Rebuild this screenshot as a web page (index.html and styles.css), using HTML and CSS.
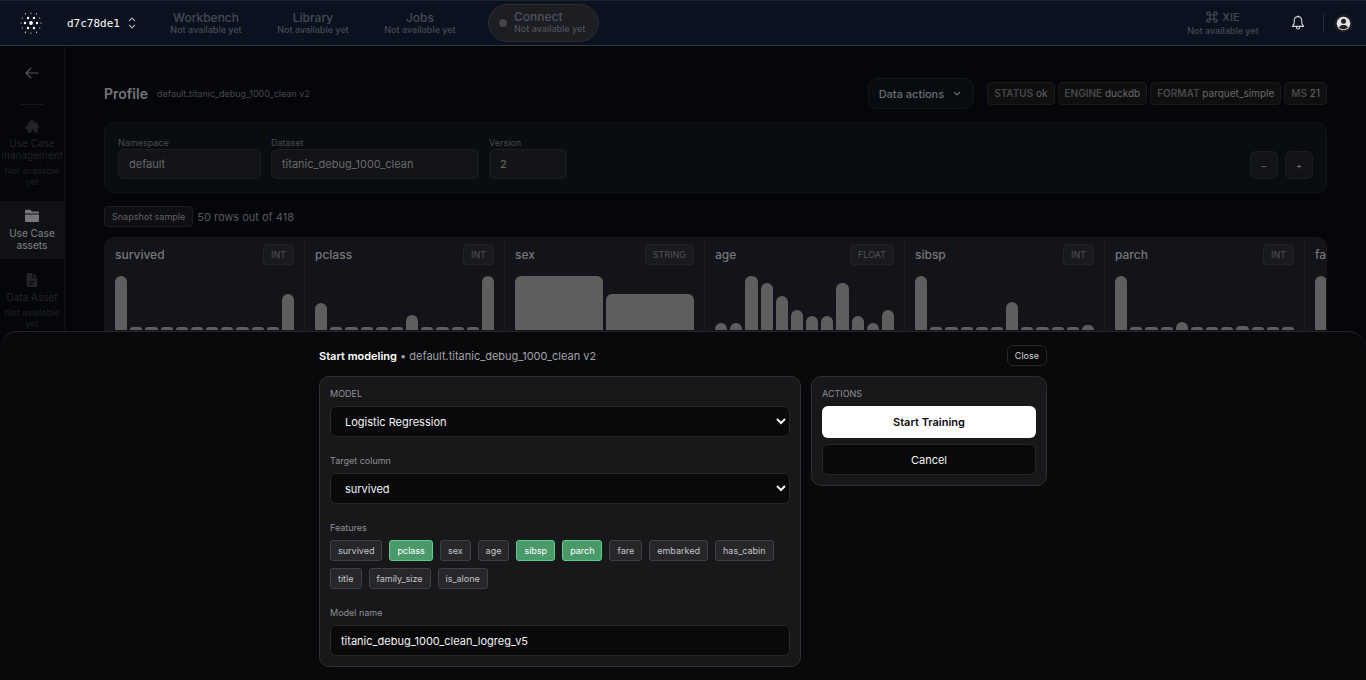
FILE: index.html
```html
<!DOCTYPE html>
<html lang="en">
<head>
    <meta charset="UTF-8">
    <meta name="viewport" content="width=device-width, initial-scale=1.0">
    <title>Profile - titanic_debug_1000_clean</title>
    <link rel="stylesheet" href="styles.css">
</head>
<body>
    <header class="topbar">
        <svg class="logo" viewBox="0 0 22 22" fill="#fff">
            <circle cx="11" cy="11" r="1.9"/>
            <circle cx="8" cy="6" r="1.2"/><circle cx="14" cy="6" r="1.2"/>
            <circle cx="5" cy="11" r="1.2"/><circle cx="17" cy="11" r="1.2"/>
            <circle cx="8" cy="16" r="1.2"/><circle cx="14" cy="16" r="1.2"/>
            <circle cx="11" cy="1" r=".6"/><circle cx="11" cy="21" r=".6"/>
            <circle cx="1" cy="11" r=".6"/><circle cx="21" cy="11" r=".6"/>
            <circle cx="5.5" cy="1.8" r=".6"/><circle cx="16.5" cy="1.8" r=".6"/>
            <circle cx="2.3" cy="6" r=".6"/><circle cx="19.7" cy="6" r=".6"/>
            <circle cx="2.3" cy="16" r=".6"/><circle cx="19.7" cy="16" r=".6"/>
            <circle cx="5.5" cy="20.2" r=".6"/><circle cx="16.5" cy="20.2" r=".6"/>
        </svg>
        <button class="project" type="button">
            d7c78de1
            <svg width="8" height="12" viewBox="0 0 8 12" fill="none" stroke="#aeb2b9" stroke-width="1.1"><path d="M1 4.2 4 1l3 3.2M1 7.8 4 11l3-3.2"/></svg>
        </button>
        <nav class="nav">
            <a class="nav-item" href="#">Workbench<small>Not available yet</small></a>
            <a class="nav-item" href="#">Library<small>Not available yet</small></a>
            <a class="nav-item" href="#">Jobs<small>Not available yet</small></a>
        </nav>
        <button class="connect" type="button">
            <span class="dot"></span>
            <span class="connect-text">Connect<small>Not available yet</small></span>
        </button>
        <div class="topbar-right">
            <a class="nav-item" href="#">
                <span class="xie">
                    <svg width="12" height="12" viewBox="0 0 12 12" fill="none" stroke="currentColor" stroke-width="1.2"><path d="M4 4h4v4H4zM4 4V2.4A1.6 1.6 0 1 0 2.4 4H4M8 4h1.6A1.6 1.6 0 1 0 8 2.4V4M8 8v1.6A1.6 1.6 0 1 0 9.6 8H8M4 8H2.4A1.6 1.6 0 1 0 4 9.6V8"/></svg>
                    XIE
                </span>
                <small>Not available yet</small>
            </a>
            <button class="icon-btn" type="button" aria-label="Notifications">
                <svg width="14" height="16" viewBox="0 0 14 16" fill="none" stroke="#d0d2d6" stroke-width="1.1" stroke-linejoin="round"><path d="M7 1.6C4.4 1.6 3.2 3.5 3.2 5.6v3L1.4 11.4h11.2l-1.8-2.8v-3C10.8 3.5 9.6 1.6 7 1.6zM5.5 11.6v.9c0 .9.6 1.5 1.5 1.5s1.5-.6 1.5-1.5v-.9M6 1.3h2"/></svg>
            </button>
            <span class="separator"></span>
            <button class="icon-btn avatar" type="button" aria-label="Account">
                <svg width="19" height="19" viewBox="0 0 19 19"><circle cx="9.5" cy="9.5" r="9" fill="#202022"/><circle cx="9.5" cy="9.5" r="6.8" fill="#e4e4e7"/><circle cx="9.5" cy="7.3" r="2.5" fill="#202022"/><path d="M5 13.2c1.2-1.5 2.7-2.1 4.5-2.1s3.3.6 4.5 2.1c-1.2 1.4-2.7 2.1-4.5 2.1s-3.3-.7-4.5-2.1z" fill="#202022"/></svg>
            </button>
        </div>
    </header>

    <div class="layout">
        <aside class="sidebar">
            <a class="back" href="#" aria-label="Back">
                <svg width="14" height="12" viewBox="0 0 14 12" fill="none" stroke="#59595d" stroke-width="1.2"><path d="M13.5 6H1M6.3.7 1 6l5.3 5.3"/></svg>
            </a>
            <a class="side-item" href="#">
                <svg width="14" height="14" viewBox="0 0 14 14" fill="currentColor"><path d="M2.6 3.4h2.8C4.500 1.800 5.300.2 6.900.2s2.400 1.600 1.500 3.200h4.200v3h1.100c.3.900.3 1.700 0 2.600h-1.100v4.700H9.300c.5-1.600-.2-2.600-1.500-2.600s-2 1-1.500 2.600H2.600v-3.400C1 10.900 0 10 0 8.600s1.200-2.300 2.600-1.500z"/></svg>
                <span>Use Case management</span>
                <small>Not available yet</small>
            </a>
            <a class="side-item active" href="#">
                <svg width="14" height="14" viewBox="0 0 14 14" fill="currentColor"><path d="M0 4.4V2.2C0 1.4.6.8 1.4.8h3.4c.5 0 .9.2 1.2.6l.9 1h5.7c.8 0 1.4.6 1.4 1.4v.6zM0 5.6h14v5.8c0 .9-.7 1.6-1.6 1.6H1.6C.7 13 0 12.3 0 11.4z"/></svg>
                <span>Use Case assets</span>
            </a>
            <a class="side-item" href="#">
                <svg width="14" height="14" viewBox="0 0 14 14" fill="currentColor"><path fill-rule="evenodd" d="M1.5 1.4C1.5.6 2.1 0 2.9 0h4.4v4.8h5v7.8c0 .8-.6 1.4-1.4 1.4h-8c-.8 0-1.4-.6-1.4-1.4zM4 8v1.1h5.8V8zm0 2.6v1.1h4v-1.1zM8.3 0l4 3.9h-4z"/></svg>
                <span>Data Asset</span>
                <small>Not available yet</small>
            </a>
        </aside>

        <main class="main">
            <div class="page-head">
                <h1>Profile</h1>
                <span class="subtitle">default.titanic_debug_1000_clean v2</span>
                <button class="data-actions" type="button">
                    Data actions
                    <svg width="8" height="6" viewBox="0 0 8 6" fill="none" stroke="currentColor" stroke-width="1.2"><path d="m1 1 3 3 3-3"/></svg>
                </button>
                <div class="pills">
                    <span class="pill"><b>STATUS</b> ok</span>
                    <span class="pill"><b>ENGINE</b> duckdb</span>
                    <span class="pill"><b>FORMAT</b> parquet_simple</span>
                    <span class="pill"><b>MS</b> 21</span>
                </div>
            </div>

            <section class="params">
                <div class="param namespace">
                    <label for="namespace">Namespace</label>
                    <input type="text" id="namespace" value="default">
                </div>
                <div class="param dataset">
                    <label for="dataset">Dataset</label>
                    <input type="text" id="dataset" value="titanic_debug_1000_clean">
                </div>
                <div class="param version">
                    <label for="version">Version</label>
                    <input type="text" id="version" value="2">
                </div>
                <div class="zoom">
                    <button type="button">−</button>
                    <button type="button">+</button>
                </div>
            </section>

            <div class="sample">
                <button class="tag" type="button">Snapshot sample</button>
                <span>50 rows out of 418</span>
            </div>

            <div class="columns" id="columns"></div>
        </main>
    </div>

    <section class="drawer" role="dialog" aria-labelledby="drawerTitle">
        <div class="drawer-inner">
            <div class="drawer-head">
                <div class="drawer-title"><strong id="drawerTitle">Start modeling</strong> • default.titanic_debug_1000_clean v2</div>
                <button class="close" type="button">Close</button>
            </div>
            <form class="drawer-grid">
                <div class="panel">
                    <div class="field">
                        <label for="model">MODEL</label>
                        <select id="model">
                            <option>Logistic Regression</option>
                        </select>
                    </div>
                    <div class="field">
                        <label for="target">Target column</label>
                        <select id="target">
                            <option>survived</option>
                            <option>pclass</option>
                            <option>sex</option>
                        </select>
                    </div>
                    <div class="field">
                        <span class="field-label">Features</span>
                        <div class="features">
                            <button class="feature" type="button">survived</button>
                            <button class="feature selected" type="button">pclass</button>
                            <button class="feature" type="button">sex</button>
                            <button class="feature" type="button">age</button>
                            <button class="feature selected" type="button">sibsp</button>
                            <button class="feature selected" type="button">parch</button>
                            <button class="feature" type="button">fare</button>
                            <button class="feature" type="button">embarked</button>
                            <button class="feature" type="button">has_cabin</button>
                            <button class="feature" type="button">title</button>
                            <button class="feature" type="button">family_size</button>
                            <button class="feature" type="button">is_alone</button>
                        </div>
                    </div>
                    <div class="field">
                        <label for="modelName">Model name</label>
                        <input type="text" id="modelName" value="titanic_debug_1000_clean_logreg_v5">
                    </div>
                </div>
                <div class="panel actions">
                    <span class="field-label">ACTIONS</span>
                    <button class="btn-primary" type="button">Start Training</button>
                    <button class="btn-secondary" type="button">Cancel</button>
                </div>
            </form>
        </div>
    </section>

    <script src="script.js"></script>
</body>
</html>
```
FILE: styles.css
```css
* {
    box-sizing: border-box;
    margin: 0;
    padding: 0;
}

body {
    font-family: Inter, "Liberation Sans", sans-serif;
    font-size: 11px;
    background-color: #04060b;
    color: #77777a;
    height: 100vh;
    overflow: hidden;
}

button, input, select {
    font-family: inherit;
    font-size: 11px;
    color: inherit;
}

button {
    cursor: pointer;
}

a {
    color: inherit;
    text-decoration: none;
}

small {
    display: block;
    font-size: 9px;
}

/* top bar */
.topbar {
    display: flex;
    align-items: center;
    height: 46px;
    padding: 0 13px 0 20px;
    background-color: #0b121f;
    border-top: 1px solid #1b232f;
    border-bottom: 1px solid #30363f;
    color: #454b56;
}

.logo {
    width: 22px;
    height: 22px;
}

.project {
    display: flex;
    align-items: center;
    gap: 8px;
    margin-left: 25px;
    border: none;
    background: none;
    color: #fff;
    font-family: "DejaVu Sans Mono", monospace;
}

.nav {
    display: flex;
    gap: 31px;
    margin-left: 32px;
}

.nav-item {
    min-width: 76px;
    font-size: 12px;
    font-weight: 500;
    line-height: 13px;
    text-align: center;
}

.nav-item small, .connect small {
    line-height: 12px;
    white-space: nowrap;
}

.connect {
    display: flex;
    align-items: center;
    gap: 7px;
    height: 38px;
    margin-left: 30px;
    padding: 0 13px 0 10px;
    border: 1px solid #2a2c30;
    border-radius: 19px;
    background-color: #1c1e23;
    color: #50525a;
}

.connect-text {
    font-size: 12px;
    font-weight: 500;
    line-height: 12px;
    text-align: left;
}

.dot {
    width: 8px;
    height: 8px;
    border-radius: 50%;
    background-color: #43454b;
}

.topbar-right {
    display: flex;
    align-items: center;
    margin-left: auto;
}

.xie {
    display: flex;
    align-items: center;
    justify-content: center;
    gap: 4px;
    font-size: 11px;
    height: 16px;
}

.icon-btn {
    display: flex;
    border: none;
    background: none;
    margin-left: 30px;
}

.separator {
    width: 1px;
    height: 19px;
    margin-left: 18px;
    background-color: #262d38;
}

.avatar {
    margin-left: 10px;
}

/* sidebar */
.layout {
    display: flex;
}

.sidebar {
    display: flex;
    flex-direction: column;
    align-items: center;
    gap: 6px;
    width: 65px;
    min-height: calc(100vh - 46px);
    border-right: 1px solid #111216;
}

.back {
    display: flex;
    width: 24px;
    height: 59px;
    padding: 21px 5px 0;
    border-bottom: 1px solid #16171a;
}

.side-item {
    display: flex;
    flex-direction: column;
    align-items: center;
    gap: 4px;
    width: 100%;
    padding: 8px 0;
    color: #232428;
    font-size: 10px;
    line-height: 12px;
    text-align: center;
}

.side-item small {
    width: 56px;
    line-height: 11px;
    color: #1f2024;
}

.side-item span {
    max-width: 62px;
}

.side-item.active {
    background-color: #101115;
    color: #77777a;
    font-weight: 500;
}

.side-item.active span {
    width: 50px;
}

/* profile page */
.main {
    flex: 1;
    min-width: 0;
    padding: 32px 39px;
}

.page-head {
    display: flex;
    align-items: center;
    margin-bottom: 13px;
}

h1 {
    font-size: 14px;
    font-weight: 600;
    color: #757578;
}

.subtitle {
    margin-left: 9px;
    font-size: 9px;
    color: #48484c;
}

.data-actions {
    display: flex;
    align-items: center;
    gap: 9px;
    height: 31px;
    margin-left: auto;
    padding: 0 12px 0 10px;
    border: 1px solid #14171b;
    border-radius: 10px;
    background-color: #080c11;
    color: #6b6d70;
    font-weight: 500;
}

.pills {
    display: flex;
    gap: 3px;
    margin-left: 13px;
}

.pill {
    height: 23px;
    padding: 0 6px;
    border: 1px solid #1a1a1b;
    border-radius: 4px;
    background-color: #0f0f10;
    font-size: 10px;
    line-height: 21px;
    color: #69696b;
}

.pill b {
    font-weight: 600;
    color: #47474a;
}

.params {
    display: flex;
    align-items: flex-end;
    gap: 10px;
    padding: 13px;
    border: 1px solid #121519;
    border-radius: 10px;
    background-color: #090c11;
}

.param label {
    display: block;
    font-size: 9px;
    line-height: 13px;
    color: #4a4c4f;
}

.param input {
    width: 100%;
    height: 30px;
    padding: 0 10px;
    border: 1px solid #1d1e22;
    border-radius: 6px;
    background-color: #131418;
    color: #69696c;
}

.namespace {
    width: 143px;
}

.dataset {
    width: 208px;
}

.version {
    width: 78px;
}

.zoom {
    display: flex;
    gap: 7px;
    margin-left: auto;
}

.zoom button {
    width: 28px;
    height: 28px;
    border: 1px solid #1d1e22;
    border-radius: 6px;
    background-color: #131418;
    font-size: 9px;
}

.sample {
    display: flex;
    align-items: center;
    gap: 4px;
    margin: 13px 0 10px;
    color: #59595c;
}

.tag {
    height: 21px;
    padding: 0 7px;
    border: 1px solid #1d1e22;
    border-radius: 4px;
    background-color: #0e0f13;
    color: #606063;
    font-size: 9px;
}

.columns {
    display: flex;
    overflow: hidden;
    border: 1px solid #15161a;
    border-radius: 10px;
    background-color: #131419;
}

.column {
    flex: 0 0 200px;
    height: 400px;
    padding: 6px 10px;
    border-right: 1px solid #1d1e22;
}

.column-head {
    display: flex;
    justify-content: space-between;
    align-items: center;
    margin-bottom: 11px;
}

.column-name {
    font-size: 12px;
    font-weight: 500;
    color: #777779;
}

.type {
    height: 21px;
    padding: 0 7px;
    border: 1px solid #222327;
    border-radius: 4px;
    background-color: #191a1e;
    font-size: 9px;
    line-height: 19px;
    color: #515255;
}

.bars {
    display: flex;
    align-items: flex-end;
    gap: 3px;
    height: 54px;
}

.bar {
    flex: 1;
    border-radius: 6px 6px 0 0;
    background-color: #5e5e5e;
}

/* modeling drawer */
.drawer {
    position: fixed;
    left: 0;
    right: 0;
    bottom: 0;
    padding: 13px 20px;
    border-top: 1px solid #26262a;
    border-radius: 18px 18px 0 0;
    background-color: #09090b;
}

.drawer-inner {
    max-width: 728px;
    margin: 0 auto;
}

.drawer-head {
    display: flex;
    justify-content: space-between;
    align-items: center;
    margin-bottom: 10px;
}

.drawer-title {
    color: #a1a1aa;
}

.drawer-title strong {
    font-weight: 600;
    color: #fff;
}

.close {
    height: 21px;
    padding: 0 7px;
    border: 1px solid #27272a;
    border-radius: 6px;
    background-color: #09090b;
    color: #d4d4d8;
    font-size: 9px;
}

.drawer-grid {
    display: grid;
    grid-template-columns: 1fr 236px;
    align-items: start;
    gap: 10px;
}

.panel {
    display: flex;
    flex-direction: column;
    gap: 17px;
    padding: 10px;
    border: 1px solid #2f2f33;
    border-radius: 10px;
    background-color: #18181b;
}

.field label, .field-label {
    display: block;
    font-size: 9px;
    line-height: 13px;
    color: #8f8f98;
}

.field label, .field .field-label {
    margin-bottom: 6px;
}

.field select, .field input {
    display: block;
    width: 100%;
    height: 31px;
    padding: 0 10px;
    border: 1px solid #27272a;
    border-radius: 6px;
    background-color: #09090b;
    color: #f4f4f5;
}

.features {
    display: flex;
    flex-wrap: wrap;
    gap: 7px;
}

.feature {
    height: 21px;
    padding: 0 7px;
    border: 1px solid #3f3f46;
    border-radius: 3px;
    background-color: #27272a;
    color: #c4c4c9;
    font-size: 9px;
}

.feature.selected {
    border-color: #5fcf8c;
    background-color: #4a9969;
    color: #fff;
}

.actions {
    gap: 6px;
}

.btn-primary {
    height: 32px;
    border: none;
    border-radius: 6px;
    background-color: #fff;
    color: #09090b;
    font-weight: 600;
}

.btn-secondary {
    height: 31px;
    border: 1px solid #27272a;
    border-radius: 6px;
    background-color: #09090b;
    color: #f4f4f5;
}
```
FILE: script.js
```js
const columns = [
    { name: 'survived', type: 'INT', bars: [54, 3, 3, 3, 3, 3, 3, 3, 3, 3, 3, 36] },
    { name: 'pclass', type: 'INT', bars: [27, 3, 3, 3, 3, 3, 15, 3, 3, 3, 3, 54] },
    { name: 'sex', type: 'STRING', bars: [54, 36] },
    { name: 'age', type: 'FLOAT', bars: [7, 7, 54, 47, 34, 20, 14, 14, 47, 14, 7, 20] },
    { name: 'sibsp', type: 'INT', bars: [54, 3, 3, 3, 3, 3, 28, 3, 3, 3, 3, 5] },
    { name: 'parch', type: 'INT', bars: [54, 3, 3, 3, 8, 3, 3, 3, 4, 3, 3, 3] },
    { name: 'fare', type: 'FLOAT', bars: [54, 20, 7, 3, 3, 3, 3, 3, 3, 3, 3, 3] }
];

document.getElementById('columns').innerHTML = columns.map(column => `
    <div class="column">
        <div class="column-head">
            <span class="column-name">${column.name}</span>
            <span class="type">${column.type}</span>
        </div>
        <div class="bars">
            ${column.bars.map(h => `<div class="bar" style="height: ${h}px"></div>`).join('')}
        </div>
    </div>
`).join('');

document.querySelectorAll('.feature').forEach(feature => {
    feature.addEventListener('click', () => feature.classList.toggle('selected'));
});
```
